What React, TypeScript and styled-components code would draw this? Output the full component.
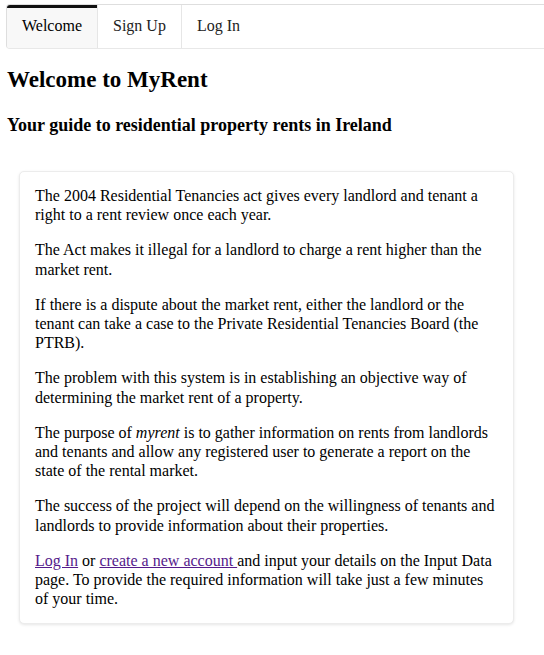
import React from "react";
import styled, { createGlobalStyle } from "styled-components";

const GlobalStyle = createGlobalStyle`
  html, body {
    margin: 0;
    padding: 0;
    overflow-x: hidden;
    background: #ffffff;
  }
  body {
    font-family: "Liberation Serif", "Times New Roman", Times, serif;
    color: #000000;
    font-size: 16px;
  }
`;

const Page = styled.div`
  padding: 4px 0 40px 6px;
`;

const Menu = styled.nav`
  display: flex;
  height: 43px;
  border: 1px solid #dedede;
  border-bottom-color: #e8e8e8;
  border-right: none;
  border-radius: 4px 0 0 4px;
  margin-right: -20px;
  overflow: hidden;
`;

const Tab = styled.a<{ $active?: boolean; $last?: boolean }>`
  display: flex;
  align-items: center;
  padding: 0 15px 2px 15px;
  font-size: 16px;
  color: ${(p) => (p.$active ? "#000000" : "#222222")};
  text-decoration: none;
  background: ${(p) => (p.$active ? "#f8f8f8" : "transparent")};
  border-right: ${(p) => (p.$last ? "none" : "1px solid #e6e6e6")};
  box-shadow: ${(p) => (p.$active ? "inset 0 3px 0 #111111" : "none")};
  cursor: pointer;
`;

const Title = styled.h1`
  margin: 17px 0 0 1px;
  font-size: 23px;
  line-height: 28px;
  font-weight: bold;
`;

const Subtitle = styled.h2`
  margin: 20px 0 0 1px;
  font-size: 18px;
  line-height: 22px;
  font-weight: bold;
`;

const Card = styled.section`
  margin: 35px 0 0 13px;
  width: 495px;
  box-sizing: border-box;
  padding: 14px 15px 15px 15px;
  border: 1px solid #ececec;
  border-radius: 5px;
  box-shadow: 0 1px 3px rgba(0, 0, 0, 0.1);
  background: #ffffff;
`;

const Para = styled.p`
  margin: 0 0 16px 0;
  font-size: 16px;
  line-height: 19.2px;
  &:last-child {
    margin-bottom: 0;
  }
`;

const Link = styled.a`
  color: #551a8b;
  text-decoration: underline;
`;

export default function App() {
  return (
    <>
      <GlobalStyle />
      <Page>
        <Menu>
          <Tab $active>Welcome</Tab>
          <Tab>Sign Up</Tab>
          <Tab $last>Log In</Tab>
        </Menu>
        <Title>Welcome to MyRent</Title>
        <Subtitle>Your guide to residential property rents in Ireland</Subtitle>
        <Card>
          <Para>
            The 2004 Residential Tenancies act gives every landlord and tenant a
            right to a rent review once each year.
          </Para>
          <Para>
            The Act makes it illegal for a landlord to charge a rent higher than
            the market rent.
          </Para>
          <Para>
            If there is a dispute about the market rent, either the landlord or
            the tenant can take a case to the Private Residential Tenancies Board
            (the PTRB).
          </Para>
          <Para>
            The problem with this system is in establishing an objective way of
            determining the market rent of a property.
          </Para>
          <Para>
            The purpose of <em>myrent</em> is to gather information on rents from
            landlords and tenants and allow any registered user to generate a
            report on the state of the rental market.
          </Para>
          <Para>
            The success of the project will depend on the willingness of tenants
            and landlords to provide information about their properties.
          </Para>
          <Para>
            <Link href="#">Log In</Link> or{" "}
            <Link href="#">create a new account </Link>and input your details on
            the Input Data page. To provide the required information will take
            just a few minutes of your time.
          </Para>
        </Card>
      </Page>
    </>
  );
}
